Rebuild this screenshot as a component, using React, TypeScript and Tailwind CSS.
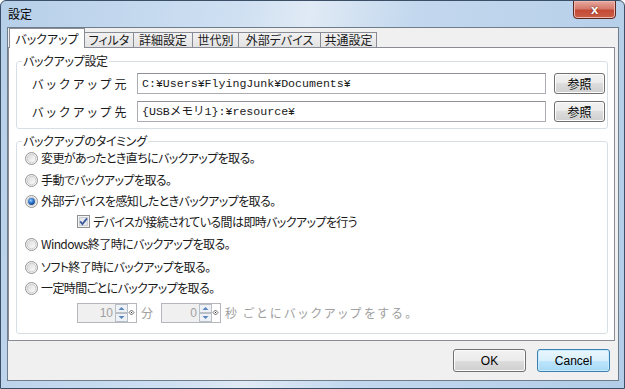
import React from "react";

const jp = "font-['Noto_Sans_CJK_JP',sans-serif] [font-feature-settings:'palt']";

function Radio({ checked = false }: { checked?: boolean }) {
  return (
    <svg width="13" height="13" viewBox="0 0 13 13" className="shrink-0">
      <defs>
        <linearGradient id="rb" x1="0" y1="0" x2="1" y2="1">
          <stop offset="0" stopColor="#d8d8d8" />
          <stop offset="1" stopColor="#ffffff" />
        </linearGradient>
        <radialGradient id="rd" cx="0.4" cy="0.35" r="0.7">
          <stop offset="0" stopColor="#9fd0ff" />
          <stop offset="0.5" stopColor="#2f78d0" />
          <stop offset="1" stopColor="#0d3a7a" />
        </radialGradient>
      </defs>
      <circle cx="6.5" cy="6.5" r="6" fill="#f4f4f4" stroke="#939393" />
      <circle cx="6.5" cy="6.5" r="4.3" fill="url(#rb)" stroke="#c4c4c4" strokeWidth="0.8" />
      {checked && <circle cx="6.5" cy="6.5" r="3.4" fill="url(#rd)" />}
    </svg>
  );
}

function Check() {
  return (
    <svg width="13" height="13" viewBox="0 0 13 13" className="shrink-0">
      <rect x="0.5" y="0.5" width="12" height="12" fill="#f4f4f4" stroke="#8f8f8f" />
      <rect x="2.5" y="2.5" width="8" height="8" fill="#e6e8ec" stroke="#c8ccd4" />
      <path d="M3.2 6.4 L5.4 9 L10 3.4" fill="none" stroke="#3d5a9c" strokeWidth="1.8" />
    </svg>
  );
}

function Spin({ value }: { value: string }) {
  return (
    <div className="flex h-[20px] w-[60px] items-stretch border border-[#b4b8bd] bg-white">
      <div className="flex-1 bg-[#f0f0f0] pr-[2px] text-right text-[12px] leading-[18px] tracking-normal text-[#a0a0a0] font-['Liberation_Sans',sans-serif]">
        {value}
      </div>
      <svg width="21" height="18" viewBox="0 0 21 18" className="shrink-0">
        <rect x="0.5" y="0.5" width="12" height="8" fill="#eef1f5" stroke="#b9bfc7" />
        <rect x="0.5" y="9.5" width="12" height="8" fill="#eef1f5" stroke="#b9bfc7" />
        <path d="M3.5 6 L6.5 3 L9.5 6 Z" fill="#5a86c0" />
        <path d="M3.5 12 L6.5 15 L9.5 12 Z" fill="#5a86c0" />
        <path d="M16.5 6 L19 8.5 L16.5 11 L14 8.5 Z" fill="none" stroke="#555" strokeWidth="0.9" />
        <rect x="16" y="8" width="1" height="1" fill="#333" />
      </svg>
    </div>
  );
}

function Button({ label, active = false, className = "" }: { label: string; active?: boolean; className?: string }) {
  return (
    <div
      className={
        "flex items-center justify-center rounded-[3px] border text-[12px] tracking-normal text-black " +
        (active
          ? "border-[#3c7fb1] bg-[linear-gradient(#eaf6fd_0%,#d9f0fc_50%,#bee6fd_50%,#a7d9f5_100%)] shadow-[inset_0_0_0_1px_#c7ebff] "
          : "border-[#707070] bg-[linear-gradient(#f2f2f2_0%,#ebebeb_50%,#dddddd_50%,#cfcfcf_100%)] shadow-[inset_0_0_0_1px_#fcfcfc] ") +
        className
      }
    >
      {label}
    </div>
  );
}

const tabs = [
  { label: "バックアップ", w: "w-[76px]" },
  { label: "フィルタ", w: "w-[50px]" },
  { label: "詳細設定", w: "w-[60px]" },
  { label: "世代別", w: "w-[47px]" },
  { label: "外部デバイス", w: "w-[83px]" },
  { label: "共通設定", w: "w-[57px]" },
];

const options = [
  { label: "変更があったとき直ちにバックアップを取る。", h: "h-[22px]" },
  { label: "手動でバックアップを取る。", h: "h-[22px]" },
  { label: "外部デバイスを感知したときバックアップを取る。", h: "h-[20px]", checked: true },
];

const options2 = [
  { label: "Windows終了時にバックアップを取る。", h: "h-[24px]" },
  { label: "ソフト終了時にバックアップを取る。", h: "h-[22px]" },
  { label: "一定時間ごとにバックアップを取る。", h: "h-[20px]" },
];

export default function App() {
  return (
    <div className="relative flex h-[389px] w-[625px] flex-col overflow-hidden rounded-t-[6px] border border-[#3b4f66] bg-[linear-gradient(100deg,#b6cfe9_0%,#cfe0f2_35%,#e0eaf5_45%,#c3d8ee_60%,#b3cde8_100%)]">
      {/* title bar */}
      <div className={"flex h-[26px] shrink-0 items-center pl-[7px] text-[12px] text-black " + jp}>設定</div>
      <div className="absolute right-[8px] top-[-1px] flex h-[19px] w-[43px] items-center justify-center rounded-b-[4px] border border-[#5d2620] bg-[linear-gradient(#e8a99e_0%,#d57a6c_45%,#c44a36_55%,#c96048_100%)] shadow-[inset_0_0_0_1px_#f0b8ad]">
        <span className="text-[13px] font-bold leading-none text-white font-['Liberation_Sans',sans-serif] [text-shadow:0_0_2px_#5d2620]">x</span>
      </div>

      {/* client */}
      <div className="mb-[7px] ml-[6px] mr-[5px] flex flex-1 flex-col border border-[#6f7c89] bg-[#f0f0f0]">
        {/* tabs */}
        <div className={"flex h-[19px] items-end pl-[1px] text-[12px] text-[#1a1a1a] " + jp}>
          {tabs.map((t, i) =>
            i === 0 ? (
              <div
                key={t.label}
                className={"relative z-10 -mb-px flex h-[20px] items-center justify-center border border-b-0 border-[#898c95] bg-white " + t.w}
              >
                {t.label}
              </div>
            ) : (
              <div
                key={t.label}
                className={"-ml-px flex h-[15px] items-center justify-center border border-b-0 border-[#898c95] bg-[linear-gradient(#f2f2f2,#e3e3e3)] " + t.w}
              >
                {t.label}
              </div>
            )
          )}
        </div>

        {/* tab panel */}
        <div className={"mr-[3px] flex h-[294px] flex-col border border-[#898c95] bg-white px-[7px] pt-[7px] text-[12px] text-[#1a1a1a] " + jp}>
          <fieldset className="mr-[-1px] rounded-[3px] border border-[#d5dfe5]">
            <legend className="ml-[5px] px-[1px] leading-[12px] tracking-[-0.3px]">バックアップ設定</legend>
            <div className="flex flex-col gap-[7px] pb-[6px] pr-[2px] pt-[6px]">
              {[
                { label: "バックアップ元", value: "C:¥Users¥FlyingJunk¥Documents¥" },
                { label: "バックアップ先", value: "{USBメモリ1}:¥resource¥" },
              ].map((r) => (
                <div key={r.label} className="flex h-[21px] items-center">
                  <div className="w-[120px] pl-[15px] text-[12px] tracking-[3.2px]">{r.label}</div>
                  <div className="flex h-[21px] flex-1 items-center border border-[#abadb3] border-t-[#8e9298] bg-white pl-[4px] text-[11.6px] font-['Liberation_Mono','Noto_Sans_CJK_JP',monospace] [font-feature-settings:normal]">
                    {r.value}
                  </div>
                  <Button label="参照" className="ml-[8px] h-[21px] w-[51px]" />
                </div>
              ))}
            </div>
          </fieldset>

          <fieldset className="mr-[-1px] mt-[6px] rounded-[3px] border border-[#d5dfe5]">
            <legend className="ml-[5px] px-[1px] leading-[12px] tracking-[-0.3px]">バックアップのタイミング</legend>
            <div className="flex flex-col pb-[10px] pl-[8px] tracking-[-0.6px]">
              {options.map((o) => (
                <div key={o.label} className={"flex items-center gap-[3px] " + o.h}>
                  <Radio checked={o.checked} />
                  <span>{o.label}</span>
                </div>
              ))}
              <div className="flex h-[21px] items-center gap-[3px] pl-[52px]">
                <Check />
                <span>デバイスが接続されている間は即時バックアップを行う</span>
              </div>
              {options2.map((o) => (
                <div key={o.label} className={"flex items-center gap-[3px] " + o.h}>
                  <Radio />
                  <span>{o.label}</span>
                </div>
              ))}
              <div className="mt-[5px] flex h-[20px] items-center pl-[52px] tracking-normal text-[#a0a0a0]">
                <Spin value="10" />
                <span className="ml-[4px] w-[20px]">分</span>
                <Spin value="0" />
                <span className="ml-[4px]">秒</span>
                <span className="ml-[6px] tracking-[2.8px]">ごとにバックアップをする。</span>
              </div>
            </div>
          </fieldset>
        </div>

        {/* buttons */}
        <div className="flex flex-1 items-start justify-end gap-[11px] pr-[8px] pt-[8px] font-['Liberation_Sans',sans-serif]">
          <Button label="OK" className="h-[23px] w-[73px]" />
          <Button label="Cancel" active className="h-[23px] w-[73px]" />
        </div>
      </div>
    </div>
  );
}
